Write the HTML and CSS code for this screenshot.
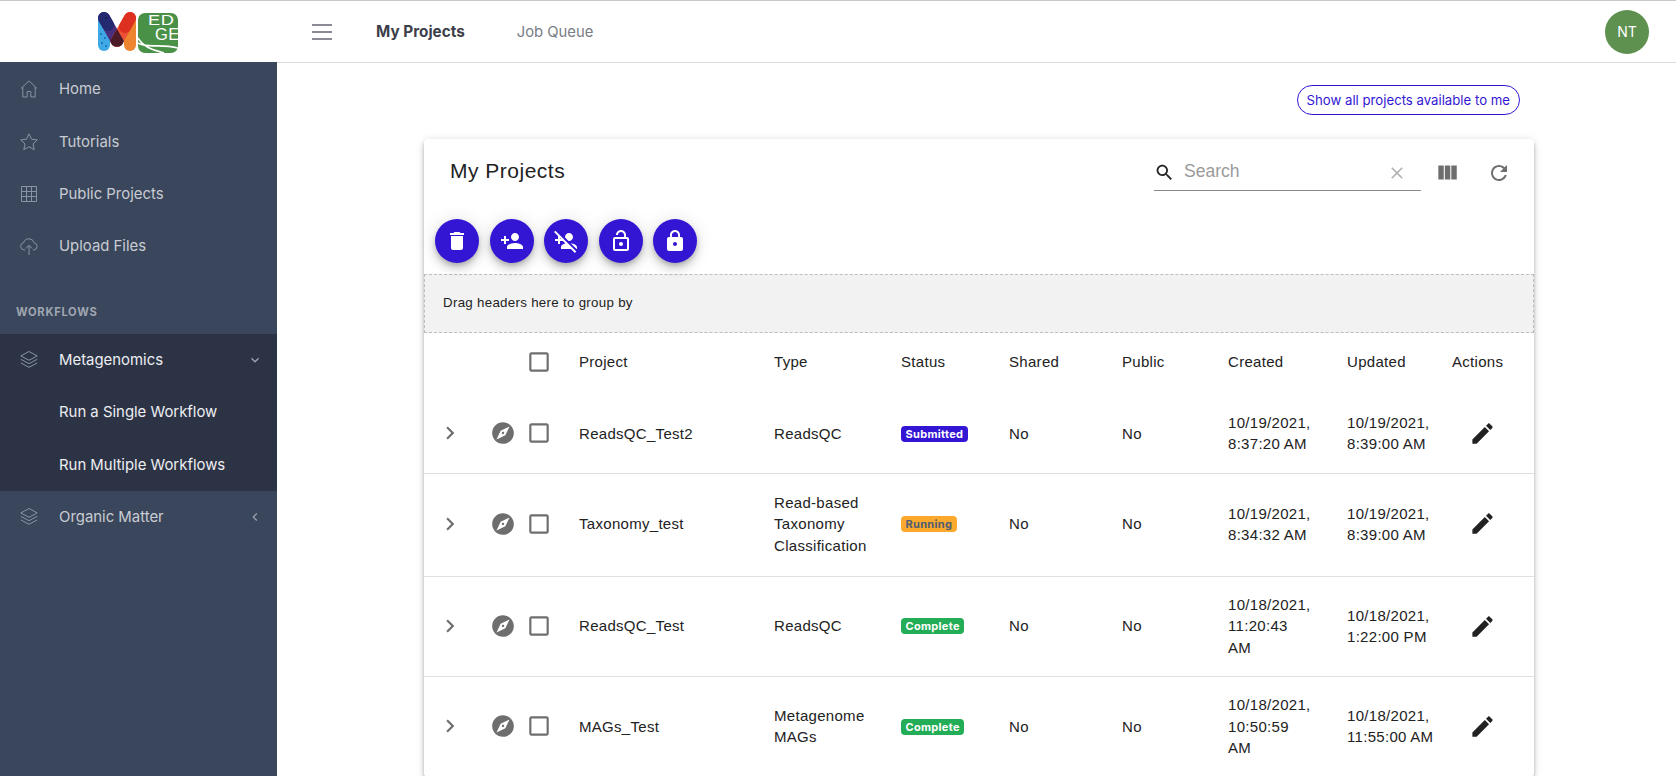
FILE: index.html
```html
<!DOCTYPE html>
<html lang="en">
<head>
  <meta charset="UTF-8">
  <meta name="viewport" content="width=device-width, initial-scale=1.0">
  <title>My Projects</title>
  <link rel="stylesheet" href="styles.css">
</head>
<body>

  <svg class="icon-defs" aria-hidden="true">
    <symbol id="i-delete" viewBox="0 0 24 24"><path d="M6 19c0 1.1.9 2 2 2h8c1.1 0 2-.9 2-2V7H6v12zM19 4h-3.5l-1-1h-5l-1 1H5v2h14V4z"/></symbol>
    <symbol id="i-person-add" viewBox="0 0 24 24"><path d="M15 12c2.21 0 4-1.79 4-4s-1.79-4-4-4-4 1.79-4 4 1.79 4 4 4zm-9-2V7H4v3H1v2h3v3h2v-3h3v-2H6zm9 4c-2.67 0-8 1.34-8 4v2h16v-2c0-2.66-5.33-4-8-4z"/></symbol>
    <symbol id="i-person-off" viewBox="0 0 24 24"><path d="M14.48 11.95c.17.02.34.05.52.05 2.21 0 4-1.79 4-4s-1.79-4-4-4-4 1.79-4 4c0 .18.03.35.05.52l3.43 3.43zm2.21 2.21L22.53 20H23v-2c0-2.14-3.56-3.5-6.31-3.84zM0 3.12l4 4V10H1v2h3v3h2v-3h2.88l2.51 2.51C9.19 15.11 7 16.3 7 18v2h9.88l4 4 1.41-1.41L1.41 1.71 0 3.12zM6.88 10H6v-.88l.88.88z"/></symbol>
    <symbol id="i-lock-open" viewBox="0 0 24 24"><path d="M12 17c1.1 0 2-.9 2-2s-.9-2-2-2-2 .9-2 2 .9 2 2 2zm6-9h-1V6c0-2.76-2.24-5-5-5S7 3.24 7 6h1.9c0-1.71 1.39-3.1 3.1-3.1 1.71 0 3.1 1.39 3.1 3.1v2H6c-1.1 0-2 .9-2 2v10c0 1.1.9 2 2 2h12c1.1 0 2-.9 2-2V10c0-1.1-.9-2-2-2zm0 12H6V10h12v10z"/></symbol>
    <symbol id="i-lock" viewBox="0 0 24 24"><path d="M18 8h-1V6c0-2.76-2.24-5-5-5S7 3.24 7 6v2H6c-1.1 0-2 .9-2 2v10c0 1.1.9 2 2 2h12c1.1 0 2-.9 2-2V10c0-1.1-.9-2-2-2zm-6 9c-1.1 0-2-.9-2-2s.9-2 2-2 2 .9 2 2-.9 2-2 2zm3.1-9H8.9V6c0-1.71 1.39-3.1 3.1-3.1 1.71 0 3.1 1.39 3.1 3.1v2z"/></symbol>
    <symbol id="i-chevron" viewBox="0 0 24 24"><path d="M10 6L8.59 7.41 13.17 12l-4.58 4.59L10 18l6-6z"/></symbol>
    <symbol id="i-explore" viewBox="0 0 24 24"><path d="M12 10.9c-.61 0-1.1.49-1.1 1.1s.49 1.1 1.1 1.1c.61 0 1.1-.49 1.1-1.1s-.49-1.1-1.1-1.1zM12 2C6.48 2 2 6.48 2 12s4.48 10 10 10 10-4.48 10-10S17.52 2 12 2zm2.19 12.19L6 18l3.81-8.19L18 6l-3.81 8.19z"/></symbol>
    <symbol id="i-check" viewBox="0 0 24 24"><path d="M19 5v14H5V5h14m0-2H5c-1.1 0-2 .9-2 2v14c0 1.1.9 2 2 2h14c1.1 0 2-.9 2-2V5c0-1.1-.9-2-2-2z"/></symbol>
    <symbol id="i-edit" viewBox="0 0 24 24"><path d="M3 17.25V21h3.75L17.81 9.94l-3.75-3.75L3 17.25zM20.71 7.04c.39-.39.39-1.02 0-1.41l-2.34-2.34c-.39-.39-1.02-.39-1.41 0l-1.83 1.83 3.75 3.75 1.83-1.83z"/></symbol>
    <symbol id="i-layers" viewBox="0 0 20 20"><path d="M10 1.500l8.200 4.400L10 10.300 1.800 5.900zM1.800 9.300L10 13.700l8.200-4.400M1.800 12.900l8.200 4.400 8.200-4.400"/></symbol>
  </svg>

  <header class="topbar">
    <div class="brand">
      <svg class="logo" viewBox="0 0 82 42" aria-label="MEDGE logo">
        <path d="M7 7L7 33" stroke="#3fa9e6" stroke-width="12" stroke-linecap="round"/>
        <path d="M7 6L20 29" stroke="#4a2f7f" stroke-width="12" stroke-linecap="round"/>
        <path d="M7 6L11 13" stroke="#232a70" stroke-width="12" stroke-linecap="round"/>
        <path d="M33 7L33 33" stroke="#ec8430" stroke-width="12" stroke-linecap="round"/>
        <path d="M33 6L20 29" stroke="#ef5138" stroke-width="12" stroke-linecap="round"/>
        <path d="M33 6L28 15" stroke="#dd3020" stroke-width="12" stroke-linecap="round"/>
        <path d="M20 16.850L26.870 29A7 7 0 0 1 13.130 29z" fill="#4b1a26"/>
        <circle cx="4" cy="22" r="1" fill="#156ab0"/>
        <circle cx="8" cy="26" r="1" fill="#156ab0"/>
        <circle cx="5" cy="31" r="1" fill="#156ab0"/>
        <circle cx="9" cy="34" r="1" fill="#156ab0"/>
        <circle cx="9" cy="6" r="1" fill="#14184f"/>
        <rect x="41" y="1" width="40" height="40" rx="7" fill="#4a9148"/>
        <path d="M41 31C51 37 62 31 81 36M41 26C47 36 57 38 67 41" fill="none" stroke="#fff" stroke-width="1.600"/>
      </svg>
      <span class="logo-ed">ED</span>
      <span class="logo-ge">GE</span>
    </div>
    <div class="topbar-main">
      <span class="burger"><i></i><i></i><i></i></span>
      <a class="topnav active">My Projects</a>
      <a class="topnav">Job Queue</a>
      <span class="avatar">NT</span>
    </div>
  </header>

  <div class="layout">
    <nav class="sidebar">
      <a class="nav-item">
        <svg class="nav-icon" viewBox="0 0 20 20"><path d="M2 9.500L10 1.800l8 7.700M3.800 8v10h4.400v-5.500h3.600V18h4.400V8"/></svg>
        Home
      </a>
      <a class="nav-item">
        <svg class="nav-icon" viewBox="0 0 20 20"><path d="M10 1.800l2.500 5.400 5.800.7-4.300 4 1.200 5.800L10 14.800l-5.200 2.900L6 11.900l-4.300-4 5.800-.7z"/></svg>
        Tutorials
      </a>
      <a class="nav-item">
        <svg class="nav-icon" viewBox="0 0 20 20"><path d="M2.500 2.500h15v15h-15zM7.500 2.500v15M12.500 2.500v15M2.500 7.500h15M2.500 12.500h15"/></svg>
        Public Projects
      </a>
      <a class="nav-item">
        <svg class="nav-icon" viewBox="0 0 20 20"><path d="M6 14H5a3.700 3.700 0 0 1-.4-7.300 5.500 5.500 0 0 1 10.600.2A3.600 3.600 0 0 1 15 14h-1M10 19V9.500M6.800 12.500L10 9.300l3.200 3.200"/></svg>
        Upload Files
      </a>

      <div class="nav-title">WORKFLOWS</div>

      <div class="nav-group">
        <a class="nav-item open">
          <svg class="nav-icon"><use href="#i-layers"/></svg>
          Metagenomics
          <svg class="nav-caret down" viewBox="0 0 24 24"><use href="#i-chevron"/></svg>
        </a>
        <a class="nav-item sub">Run a Single Workflow</a>
        <a class="nav-item sub">Run Multiple Workflows</a>
      </div>

      <a class="nav-item">
        <svg class="nav-icon"><use href="#i-layers"/></svg>
        Organic Matter
        <svg class="nav-caret left" viewBox="0 0 24 24"><use href="#i-chevron"/></svg>
      </a>
    </nav>

    <main class="content">
      <div class="content-top">
        <button class="btn-outline" type="button">Show all projects available to me</button>
      </div>

      <section class="card">
        <div class="toolbar">
          <h2 class="card-title">My Projects</h2>
          <div class="search">
            <svg class="search-icon" viewBox="0 0 24 24"><path d="M15.500 14h-.79l-.28-.27C15.410 12.590 16 11.110 16 9.500 16 5.910 13.090 3 9.500 3S3 5.910 3 9.500 5.910 16 9.500 16c1.610 0 3.090-.59 4.230-1.570l.27.28v.79l5 4.990L20.490 19l-4.990-5zm-6 0C7.010 14 5 11.990 5 9.500S7.010 5 9.500 5 14 7.010 14 9.500 11.990 14 9.500 14z"/></svg>
            <span class="search-text">Search</span>
            <svg class="clear-icon" viewBox="0 0 24 24"><path d="M19 6.410L17.590 5 12 10.590 6.410 5 5 6.410 10.590 12 5 17.590 6.410 19 12 13.410 17.590 19 19 17.590 13.410 12z"/></svg>
          </div>
          <svg class="tool-icon columns" viewBox="0 0 24 24"><path d="M10 18h5V5h-5v13zm-6 0h5V5H4v13zM16 5v13h5V5h-5z"/></svg>
          <svg class="tool-icon" viewBox="0 0 24 24"><path d="M17.650 6.350C16.200 4.900 14.210 4 12 4c-4.420 0-7.990 3.580-7.990 8s3.570 8 7.990 8c3.730 0 6.840-2.550 7.730-6h-2.080c-.82 2.330-3.040 4-5.650 4-3.310 0-6-2.690-6-6s2.690-6 6-6c1.660 0 3.140.690 4.220 1.780L13 11h7V4l-2.350 2.350z"/></svg>
        </div>

        <div class="fab-row">
          <button class="fab" type="button"><svg><use href="#i-delete"/></svg></button>
          <button class="fab" type="button"><svg><use href="#i-person-add"/></svg></button>
          <button class="fab" type="button"><svg><use href="#i-person-off"/></svg></button>
          <button class="fab" type="button"><svg><use href="#i-lock-open"/></svg></button>
          <button class="fab" type="button"><svg><use href="#i-lock"/></svg></button>
        </div>

        <div class="group-bar">Drag headers here to group by</div>

        <table class="projects">
          <colgroup>
            <col class="c-expand"><col class="c-detail"><col class="c-check">
            <col class="c-project"><col class="c-type"><col class="c-status">
            <col class="c-shared"><col class="c-public"><col class="c-created">
            <col class="c-updated"><col class="c-actions">
          </colgroup>
          <thead>
            <tr>
              <th></th>
              <th></th>
              <th class="cell-icon"><svg class="check"><use href="#i-check"/></svg></th>
              <th>Project</th>
              <th>Type</th>
              <th>Status</th>
              <th>Shared</th>
              <th>Public</th>
              <th>Created</th>
              <th>Updated</th>
              <th>Actions</th>
            </tr>
          </thead>
          <tbody>
            <tr>
              <td class="cell-icon"><svg class="chevron"><use href="#i-chevron"/></svg></td>
              <td class="cell-icon"><svg class="explore"><use href="#i-explore"/></svg></td>
              <td class="cell-icon"><svg class="check"><use href="#i-check"/></svg></td>
              <td>ReadsQC_Test2</td>
              <td>ReadsQC</td>
              <td><span class="badge submitted">Submitted</span></td>
              <td>No</td>
              <td>No</td>
              <td class="cell-created">10/19/2021, 8:37:20 AM</td>
              <td>10/19/2021, 8:39:00 AM</td>
              <td class="cell-edit"><svg class="edit"><use href="#i-edit"/></svg></td>
            </tr>
            <tr>
              <td class="cell-icon"><svg class="chevron"><use href="#i-chevron"/></svg></td>
              <td class="cell-icon"><svg class="explore"><use href="#i-explore"/></svg></td>
              <td class="cell-icon"><svg class="check"><use href="#i-check"/></svg></td>
              <td>Taxonomy_test</td>
              <td>Read-based Taxonomy Classification</td>
              <td><span class="badge running">Running</span></td>
              <td>No</td>
              <td>No</td>
              <td class="cell-created">10/19/2021, 8:34:32 AM</td>
              <td>10/19/2021, 8:39:00 AM</td>
              <td class="cell-edit"><svg class="edit"><use href="#i-edit"/></svg></td>
            </tr>
            <tr>
              <td class="cell-icon"><svg class="chevron"><use href="#i-chevron"/></svg></td>
              <td class="cell-icon"><svg class="explore"><use href="#i-explore"/></svg></td>
              <td class="cell-icon"><svg class="check"><use href="#i-check"/></svg></td>
              <td>ReadsQC_Test</td>
              <td>ReadsQC</td>
              <td><span class="badge complete">Complete</span></td>
              <td>No</td>
              <td>No</td>
              <td class="cell-created">10/18/2021, 11:20:43 AM</td>
              <td>10/18/2021, 1:22:00 PM</td>
              <td class="cell-edit"><svg class="edit"><use href="#i-edit"/></svg></td>
            </tr>
            <tr>
              <td class="cell-icon"><svg class="chevron"><use href="#i-chevron"/></svg></td>
              <td class="cell-icon"><svg class="explore"><use href="#i-explore"/></svg></td>
              <td class="cell-icon"><svg class="check"><use href="#i-check"/></svg></td>
              <td>MAGs_Test</td>
              <td>Metagenome MAGs</td>
              <td><span class="badge complete">Complete</span></td>
              <td>No</td>
              <td>No</td>
              <td class="cell-created">10/18/2021, 10:50:59 AM</td>
              <td>10/18/2021, 11:55:00 AM</td>
              <td class="cell-edit"><svg class="edit"><use href="#i-edit"/></svg></td>
            </tr>
          </tbody>
        </table>
      </section>
    </main>
  </div>

</body>
</html>
```

FILE: styles.css
```css
html, body {
  height: 100%;
  margin: 0;
  overflow: hidden;
}

body {
  font-family: "Liberation Sans", Arial, sans-serif;
  color: #222;
  background-color: #fff;
}

.icon-defs {
  display: none;
}

/* top bar */
.topbar {
  display: flex;
  height: 62px;
  box-sizing: border-box;
  border-top: 1px solid #c8c8c8;
}

.brand {
  position: relative;
  width: 277px;
  flex: none;
}

.logo {
  position: absolute;
  left: 97px;
  top: 11px;
  width: 82px;
  height: 42px;
}

.logo-ed, .logo-ge {
  position: absolute;
  font-family: "Liberation Sans", sans-serif;
  color: #fff;
}

.logo-ed {
  left: 148px;
  top: 13px;
  font-size: 14px;
  line-height: 12px;
  letter-spacing: 0.5px;
  transform: scaleX(1.3);
  transform-origin: left;
}

.logo-ge {
  left: 155px;
  top: 26px;
  font-size: 16.500px;
  line-height: 14px;
  letter-spacing: 0.5px;
}

.topbar-main {
  display: flex;
  align-items: center;
  flex: 1;
  height: 62px;
  box-sizing: border-box;
  padding: 0 27px 0 35px;
  border-bottom: 1px solid #d8dbe0;
  font-family: Inter, sans-serif;
}

.burger {
  display: flex;
  flex-direction: column;
  gap: 5px;
  width: 20px;
  margin-right: 44px;
}

.burger i {
  display: block;
  height: 2px;
  background-color: #8a8a94;
}

.topnav {
  color: #7a7d85;
  font-size: 14.800px;
}

.topnav.active {
  margin-right: 52px;
  color: #3c3f4a;
  font-size: 15.300px;
  font-weight: 700;
}

.avatar {
  display: flex;
  align-items: center;
  justify-content: center;
  width: 44px;
  height: 44px;
  margin-left: auto;
  border-radius: 50%;
  background-color: #5e9150;
  font-size: 14px;
  color: #fff;
}

/* sidebar */
.layout {
  display: flex;
  height: 714px;
}

.sidebar {
  width: 277px;
  flex: none;
  padding-top: 1px;
  box-sizing: border-box;
  background-color: #3a465b;
  font-family: Inter, sans-serif;
  font-size: 14.900px;
}

.nav-item {
  display: flex;
  align-items: center;
  height: 52.400px;
  padding-left: 19px;
  color: #c9ccd3;
}

.nav-icon {
  width: 20px;
  height: 20px;
  margin-right: 20px;
  fill: none;
  stroke: #8a93a3;
  stroke-width: 1;
}

.nav-title {
  height: 61px;
  box-sizing: border-box;
  padding: 31px 0 0 16px;
  line-height: 17px;
  font-size: 11.200px;
  font-weight: 700;
  letter-spacing: 0.7px;
  color: #a0a6b2;
}

.nav-group {
  background-color: #2c3345;
}

.nav-item.open, .nav-item.sub {
  color: #eceef2;
}

.nav-item.sub {
  padding-left: 59px;
}

.nav-caret {
  width: 16px;
  height: 16px;
  margin-left: auto;
  margin-right: 14px;
  fill: #9aa1ad;
}

.nav-caret.down {
  transform: rotate(90deg);
}

.nav-caret.left {
  transform: rotate(180deg);
}

/* main area */
.content {
  flex: 1;
  overflow: hidden;
}

.content-top {
  display: flex;
  justify-content: flex-end;
  height: 77px;
  padding: 23px 156px 0 0;
  box-sizing: border-box;
}

.btn-outline {
  height: 30px;
  padding: 0 9px;
  border: 1px solid #3316d4;
  border-radius: 15px;
  background-color: #fff;
  color: #3316d4;
  font-family: Inter, sans-serif;
  font-size: 13.200px;
}

.card {
  width: 1110px;
  margin-left: 147px;
  border-radius: 4px;
  background-color: #fff;
  box-shadow: 0 2px 4px -1px rgba(0,0,0,0.2), 0 4px 5px rgba(0,0,0,0.14), 0 1px 10px rgba(0,0,0,0.12);
}

.toolbar {
  display: flex;
  align-items: center;
  height: 68px;
  padding: 0 23px 0 26px;
}

.card-title {
  flex: 1;
  margin: 0 0 4px;
  font-size: 21px;
  font-weight: 400;
  letter-spacing: 0.5px;
}

.search {
  display: flex;
  align-items: center;
  width: 267px;
  height: 40px;
  margin-bottom: 6px;
  border-bottom: 1px solid #8a8a8a;
}

.search-icon {
  width: 21px;
  height: 21px;
  margin: 6px 9px 0 0;
  fill: #222;
}

.search-text {
  flex: 1;
  margin-top: 3px;
  font-size: 17.500px;
  color: #9a9a9a;
}

.clear-icon {
  width: 20px;
  height: 20px;
  margin: 6px 14px 0 0;
  fill: #b3b3b3;
}

.tool-icon {
  width: 24px;
  height: 24px;
  margin-left: 27px;
  fill: #6e6e6e;
}

.tool-icon.columns {
  width: 26px;
  height: 26px;
  margin-left: 13px;
}

.fab-row {
  display: flex;
  gap: 10.500px;
  height: 67px;
  padding: 12px 0 0 11px;
  box-sizing: border-box;
}

.fab {
  display: flex;
  align-items: center;
  justify-content: center;
  width: 44px;
  height: 44px;
  padding: 0;
  border: none;
  border-radius: 50%;
  background-color: #3316d4;
  box-shadow: 0 3px 5px -1px rgba(0,0,0,0.2), 0 6px 10px rgba(0,0,0,0.14), 0 1px 18px rgba(0,0,0,0.12);
}

.fab svg {
  width: 24px;
  height: 24px;
  fill: #fff;
}

.group-bar {
  height: 59px;
  box-sizing: border-box;
  padding-left: 18px;
  line-height: 56px;
  font-size: 13.300px;
  letter-spacing: 0.3px;
  background-color: #f2f2f2;
  border: 1px dashed #bdbdbd;
}

/* table */
.projects {
  width: 100%;
  table-layout: fixed;
  border-collapse: collapse;
  font-size: 15px;
  line-height: 21.400px;
  letter-spacing: 0.3px;
}

.c-expand { width: 52px; }
.c-detail { width: 51px; }
.c-check { width: 52px; }
.c-project { width: 195px; }
.c-type { width: 127px; }
.c-status { width: 108px; }
.c-shared { width: 113px; }
.c-public { width: 106px; }
.c-created { width: 119px; }
.c-updated { width: 105px; }
.c-actions { width: 82px; }

.projects th {
  height: 59px;
  padding: 0 0 2px;
  box-sizing: border-box;
  font-weight: 400;
  text-align: left;
}

.projects td {
  padding: 17px 10px 18px 0;
  border-bottom: 1px solid #e0e0e0;
}

.projects tbody tr:nth-child(1) td {
  padding-top: 20px;
  padding-bottom: 18px;
}

.projects tbody tr:nth-child(2) td {
  padding-top: 18px;
  padding-bottom: 20px;
}

.projects td.cell-icon, .projects td.cell-edit {
  padding-right: 0;
}

.projects td.cell-created {
  padding-right: 35px;
}

.cell-icon svg, .cell-edit svg {
  display: block;
}

.check {
  width: 26px;
  height: 26px;
  margin-left: -1px;
  fill: #6e6e6e;
}

.chevron {
  width: 26px;
  height: 26px;
  margin-left: 13px;
  fill: #6e6e6e;
}

.explore {
  width: 26px;
  height: 26px;
  margin-left: 14px;
  fill: #6e6e6e;
}

.edit {
  width: 27px;
  height: 27px;
  margin-left: 17px;
  fill: #222;
}

.badge {
  display: inline-block;
  margin-bottom: 2px;
  padding: 0 4.500px;
  border-radius: 4px;
  font-family: Inter, sans-serif;
  font-size: 11px;
  font-weight: 700;
  line-height: 16px;
  letter-spacing: 0.3px;
  vertical-align: middle;
  color: #fff;
}

.badge.submitted {
  background-color: #3316d4;
}

.badge.running {
  background-color: #fba92c;
  color: #4f5d73;
}

.badge.complete {
  background-color: #22ad56;
}
```
